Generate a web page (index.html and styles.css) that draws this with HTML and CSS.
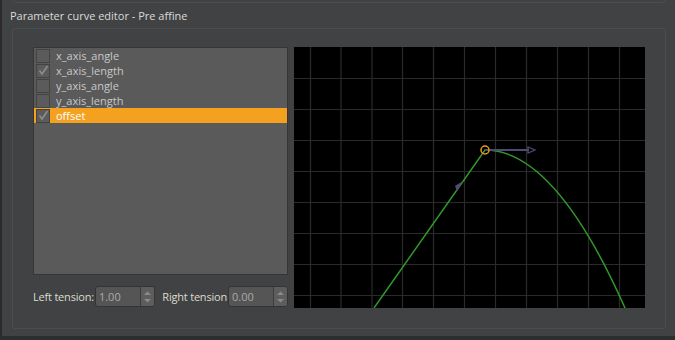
FILE: index.html
```html
<!DOCTYPE html>
<html lang="en">

<head>
    <meta charset="UTF-8">
    <title>Parameter curve editor</title>
    <link rel="stylesheet" href="styles.css">
</head>

<body>
    <div class="panel">
        <div class="prev-group"></div>
        <div class="title">Parameter curve editor - Pre affine</div>

        <div class="group">
            <div class="left-col">
                <ul class="param-list">
                    <li class="item"><span class="check"></span>x_axis_angle</li>
                    <li class="item">
                        <span class="check"><svg width="11" height="11" viewBox="0 0 11 11"><path d="M1.5 5.5 L4 9 L9.5 1" fill="none" stroke="#8c8c8c" stroke-width="1.6" /></svg></span>x_axis_length
                    </li>
                    <li class="item"><span class="check"></span>y_axis_angle</li>
                    <li class="item"><span class="check"></span>y_axis_length</li>
                    <li class="item selected">
                        <span class="check"><svg width="11" height="11" viewBox="0 0 11 11"><path d="M1.5 5.5 L4 9 L9.5 1" fill="none" stroke="#8c8c8c" stroke-width="1.6" /></svg></span>offset
                    </li>
                </ul>

                <div class="tension-row">
                    <label class="tension-label">Left tension:</label>
                    <div class="spin">
                        <span class="spin-value">1.00</span>
                        <span class="spin-buttons">
                            <svg width="9" height="14" viewBox="0 0 9 14">
                                <path d="M1 5 L4.5 1.5 L8 5 Z" fill="#8a8a8a" />
                                <path d="M1 9 L4.5 12.5 L8 9 Z" fill="#8a8a8a" />
                            </svg>
                        </span>
                    </div>
                    <label class="tension-label right">Right tension</label>
                    <div class="spin">
                        <span class="spin-value">0.00</span>
                        <span class="spin-buttons">
                            <svg width="9" height="14" viewBox="0 0 9 14">
                                <path d="M1 5 L4.5 1.5 L8 5 Z" fill="#8a8a8a" />
                                <path d="M1 9 L4.5 12.5 L8 9 Z" fill="#8a8a8a" />
                            </svg>
                        </span>
                    </div>
                </div>
            </div>

            <div class="curve-view">
                <svg width="351" height="261" viewBox="0 0 351 261">
                    <rect width="351" height="261" fill="#000" />
                    <g stroke="#2a2a2a" stroke-width="1.2">
                        <line x1="16.5" y1="0" x2="16.5" y2="261" />
                        <line x1="47" y1="0" x2="47" y2="261" />
                        <line x1="78" y1="0" x2="78" y2="261" />
                        <line x1="108.5" y1="0" x2="108.5" y2="261" />
                        <line x1="139.5" y1="0" x2="139.5" y2="261" />
                        <line x1="170.5" y1="0" x2="170.5" y2="261" />
                        <line x1="201.5" y1="0" x2="201.5" y2="261" />
                        <line x1="232.5" y1="0" x2="232.5" y2="261" />
                        <line x1="263.5" y1="0" x2="263.5" y2="261" />
                        <line x1="294.5" y1="0" x2="294.5" y2="261" />
                        <line x1="325.5" y1="0" x2="325.5" y2="261" />
                        <line x1="0" y1="31.5" x2="351" y2="31.5" />
                        <line x1="0" y1="62.5" x2="351" y2="62.5" />
                        <line x1="0" y1="93.5" x2="351" y2="93.5" />
                        <line x1="0" y1="124.5" x2="351" y2="124.5" />
                        <line x1="0" y1="155.5" x2="351" y2="155.5" />
                        <line x1="0" y1="186.5" x2="351" y2="186.5" />
                        <line x1="0" y1="217.5" x2="351" y2="217.5" />
                        <line x1="0" y1="248.5" x2="351" y2="248.5" />
                    </g>
                    <!-- curve -->
                    <path d="M80 261 L191 103 Q261 103 331 261" fill="none" stroke="#2f9a2a" stroke-width="1.5" />
                    <!-- tangent handles -->
                    <line x1="191" y1="103" x2="235" y2="103" stroke="#4d4b70" stroke-width="2" />
                    <path d="M234 100 L241 103 L234 106 Z" fill="none" stroke="#4d4b70" stroke-width="1.3" />
                    <path d="M167 136 L163 143 L162 139 Z" fill="#4d4b70" stroke="#4d4b70" stroke-width="1.5" />
                    <circle cx="191" cy="103" r="4" fill="none" stroke="#e89a1c" stroke-width="1.5" />
                </svg>
            </div>
        </div>
    </div>
</body>

</html>
```

FILE: styles.css
```css
body {
    margin: 0;
    background-color: #2c2d2d;
    font-family: 'Open Sans', 'Noto Sans', sans-serif;
    font-size: 11px;
    color: #d6d6d6;
}

.panel {
    height: 336px;
    background-color: #414243;
    border-left: 2px solid #2b2b2c;
    box-sizing: border-box;
}

.prev-group {
    height: 2px;
    margin-left: 11px;
    margin-right: 10px;
    border: 1px solid #4c4d4e;
    border-top: none;
    border-radius: 0 0 3px 3px;
}

.title {
    padding: 5px 0 0 8px;
    height: 20px;
    color: #dadada;
}

.group {
    display: flex;
    gap: 6px;
    margin-left: 10px;
    margin-right: 9px;
    padding: 18px 19px 20px 20px;
    border: 1px solid #4c4d4e;
    border-radius: 3px;
}

.left-col {
    width: 255px;
    display: flex;
    flex-direction: column;
}

.param-list {
    list-style: none;
    margin: 0;
    padding: 0;
    height: 228px;
    box-sizing: border-box;
    background-color: #5a5a5a;
    border: 1px solid #363636;
}

.item {
    height: 15px;
    display: flex;
    align-items: center;
    gap: 6px;
    padding-left: 2px;
    color: #c8c8c8;
}

.item.selected {
    background-color: #f3a11f;
    color: #ffffff;
}

.check {
    width: 12px;
    height: 12px;
    border: 1px solid #434343;
    background-color: #5b5b5b;
    display: flex;
    align-items: center;
    justify-content: center;
}

.check svg {
    display: block;
}

.tension-row {
    display: flex;
    align-items: center;
    margin-top: 11px;
    height: 21px;
}

.tension-label {
    flex: none;
    white-space: nowrap;
    color: #dcdcd0;
    letter-spacing: -0.2px;
    margin-right: 1px;
}

.tension-label.right {
    margin-left: auto;
}

.spin {
    width: 60px;
    height: 21px;
    box-sizing: border-box;
    display: flex;
    border: 1px solid #343434;
    border-radius: 3px;
    background-color: #555555;
    overflow: hidden;
}

.spin-value {
    flex: 1;
    padding-left: 3px;
    line-height: 19px;
    color: #a9a9a9;
}

.spin-buttons {
    width: 13px;
    display: flex;
    align-items: center;
    justify-content: center;
    background-color: #5d5d5d;
    border-left: 1px solid #3c3c3c;
}

.curve-view {
    width: 351px;
    height: 261px;
}

.curve-view svg {
    display: block;
}
```
